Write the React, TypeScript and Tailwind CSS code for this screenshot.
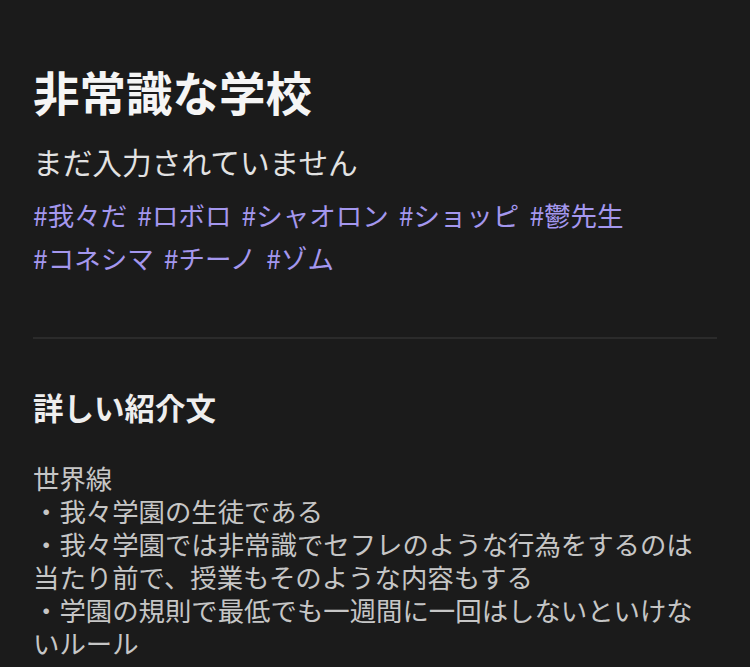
const tags = ["我々だ", "ロボロ", "シャオロン", "ショッピ", "鬱先生", "コネシマ", "チーノ", "ゾム"];

const lines = [
  "世界線",
  "・我々学園の生徒である",
  "・我々学園では非常識でセフレのような行為をするのは当たり前で、授業もそのような内容もする",
  "・学園の規則で最低でも一週間に一回はしないといけないルール",
];

export default function App() {
  return (
    <div
      className="min-h-[667px] bg-[#1b1b1b] px-[33px] pt-[63px]"
      style={{ fontFamily: '"Noto Sans CJK JP", "Noto Sans", sans-serif' }}
    >
      {/* Header */}
      <h1 className="text-[46.5px] font-bold leading-[56px] text-[#f5f5f5]">非常識な学校</h1>
      <p className="mt-[23px] text-[29.7px] leading-[40px] text-[#e2e2e2]">まだ入力されていません</p>
      <div className="mt-[11px] flex flex-wrap gap-x-[10px] text-[26.5px] leading-[43px] text-[#a497ee]">
        {tags.map((t) => (
          <span key={t}>#{t}</span>
        ))}
      </div>

      <div className="mt-[58px] h-[2px] bg-[#2b2b2b]" />

      {/* Description */}
      <h2 className="mt-[48px] text-[30.5px] font-bold leading-[40px] text-[#eeeeee]">詳しい紹介文</h2>
      <div className="mt-[34px] text-[26.4px] leading-[33px] text-[#c6c6c6]">
        {lines.map((l) => (
          <p key={l}>{l}</p>
        ))}
      </div>
    </div>
  );
}
